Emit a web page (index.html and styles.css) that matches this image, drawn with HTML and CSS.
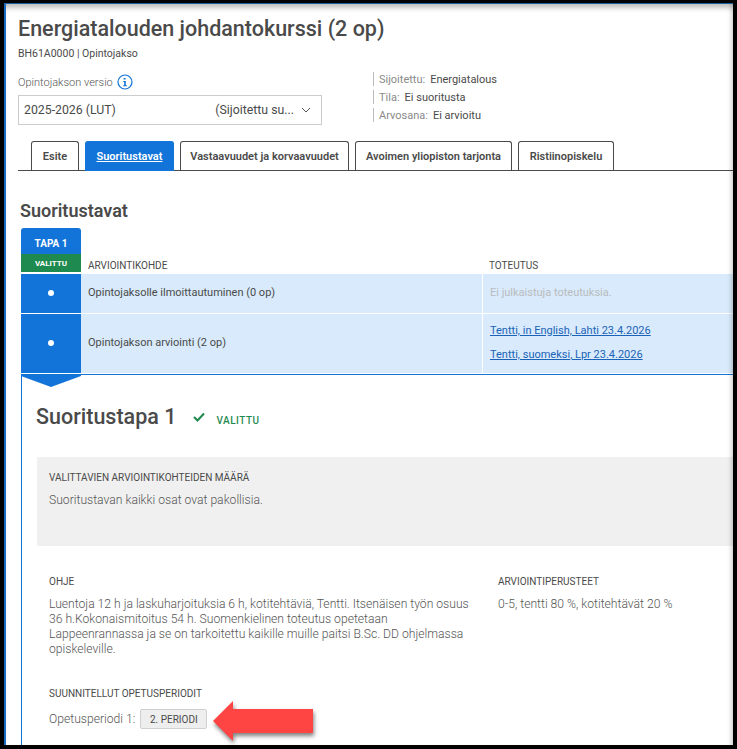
FILE: index.html
```html
<!DOCTYPE html>
<html lang="fi">
<head>
<meta charset="utf-8">
<title>Energiatalouden johdantokurssi</title>
<link rel="stylesheet" href="styles.css">
</head>
<body>
<div class="window">
  <main class="page">
    <h1 class="title">Energiatalouden johdantokurssi (2 op)</h1>
    <p class="code">BH61A0000 | Opintojakso</p>
    <div class="meta">
      <div class="version">
        <div class="version-label">Opintojakson versio
          <svg class="info" viewBox="0 0 16 16" width="16" height="16"><circle cx="8" cy="8" r="7" fill="none" stroke="#1274d8" stroke-width="1.2"/><path d="M6.6 4h2v1.6h-2zM6.2 7h2.6v4.2h1v1H6.2v-1h1V8h-1z" fill="#1274d8"/></svg>
        </div>
        <div class="select"><span>2025-2026 (LUT)</span><span class="select-right">(Sijoitettu su...<svg class="chev" viewBox="0 0 10 6" width="10" height="6"><path d="M1 1l4 4 4-4" fill="none" stroke="#555" stroke-width="1"/></svg></span></div>
      </div>
      <dl class="facts">
        <div class="fact"><dt>Sijoitettu:</dt><dd>Energiatalous</dd></div>
        <div class="fact"><dt>Tila:</dt><dd>Ei suoritusta</dd></div>
        <div class="fact"><dt>Arvosana:</dt><dd>Ei arvioitu</dd></div>
      </dl>
    </div>
    <nav class="tabs">
      <a class="tab t1">Esite</a>
      <a class="tab t2 active">Suoritustavat</a>
      <a class="tab t3">Vastaavuudet ja korvaavuudet</a>
      <a class="tab t4">Avoimen yliopiston tarjonta</a>
      <a class="tab t5">Ristiinopiskelu</a>
    </nav>
    <h2 class="section-title">Suoritustavat</h2>
    <div class="matrix">
      <div class="way-head"><div class="way-name">TAPA 1</div><div class="way-state">VALITTU</div></div>
      <div class="col-head col-a">ARVIOINTIKOHDE</div>
      <div class="col-head col-b">TOTEUTUS</div>
      <div class="way-cell r1"><span class="dot"></span></div>
      <div class="cell r1">Opintojaksolle ilmoittautuminen (0 op)</div>
      <div class="cell r1 sep muted">Ei julkaistuja toteutuksia.</div>
      <div class="way-cell r2"><span class="dot"></span></div>
      <div class="cell r2">Opintojakson arviointi (2 op)</div>
      <div class="cell r2 sep links"><a>Tentti, in English, Lahti 23.4.2026</a><a>Tentti, suomeksi, Lpr 23.4.2026</a></div>
    </div>
    <section class="panel">
      <svg class="pointer" viewBox="0 0 60 12" width="60" height="12"><path d="M0 0h60v1L30 12 0 1z" fill="#1274d8"/></svg>
      <div class="panel-head">
        <h3 class="panel-title">Suoritustapa 1</h3>
        <svg class="check" viewBox="0 0 12 10" width="12" height="10"><path d="M1 5l3.5 3.5L11 1.5" fill="none" stroke="#1f8a50" stroke-width="2"/></svg>
        <span class="chosen">VALITTU</span>
      </div>
      <div class="graybox">
        <div class="label">VALITTAVIEN ARVIOINTIKOHTEIDEN MÄÄRÄ</div>
        <p class="body">Suoritustavan kaikki osat ovat pakollisia.</p>
      </div>
      <div class="two">
        <div class="ohje">
          <div class="label">OHJE</div>
          <p class="body">Luentoja 12 h ja laskuharjoituksia 6 h, kotitehtäviä, Tentti. Itsenäisen työn osuus 36 h.Kokonaismitoitus 54 h. Suomenkielinen toteutus opetetaan Lappeenrannassa ja se on tarkoitettu kaikille muille paitsi B.Sc. DD ohjelmassa opiskeleville.</p>
        </div>
        <div class="perusteet">
          <div class="label">ARVIOINTIPERUSTEET</div>
          <p class="body">0-5, tentti 80 %, kotitehtävät 20 %</p>
        </div>
      </div>
      <div class="label periods">SUUNNITELLUT OPETUSPERIODIT</div>
      <div class="period-row"><span class="body">Opetusperiodi 1:</span><span class="chip">2. PERIODI</span></div>
    </section>
  </main>
  <svg class="callout" viewBox="0 0 102 44" width="102" height="44"><path d="M0 20L20 0v8h80v24H20v8z" fill="#ff4444"/></svg>
</div>
</body>
</html>
```
FILE: styles.css
```css
* { box-sizing: border-box; }
html, body { margin: 0; height: 100%; overflow: hidden; background: #000; }
body { font-family: Roboto, "Liberation Sans", sans-serif; color: #4a4a4a; }
.window {
  position: relative;
  margin: 3px 4px 0 4px;
  width: 729px;
  height: 742px;
  background: #fff;
  border-top: 1px solid #1a5f9e;
  border-left: 2px solid #1a6cc0;
  overflow: hidden;
}
.window::after {
  content: "";
  position: absolute;
  inset: 0;
  pointer-events: none;
  box-shadow: inset 0 7px 5px -3px rgba(0,0,0,.25), inset -5px 0 4px -3px rgba(0,0,0,.18);
}
.page { padding: 0 0 0 12px; }
.title { margin: 10px 0 0; font-size: 21.5px; line-height: 30px; font-weight: 500; color: #4a4a4a; }
.code { margin: 3px 0 0; font-size: 10.5px; line-height: 14px; color: #4a4a4a; }
.meta { display: flex; margin-top: 12px; height: 57px; }
.version { width: 304px; }
.version-label { display: flex; align-items: center; gap: 4px; height: 16px; font-size: 11px; font-weight: 300; color: #555; margin-top: 1px; }
.select { display: flex; justify-content: space-between; align-items: center; margin-top: 5px; height: 30px; padding: 0 10px 0 5px; border: 1px solid #ccc; font-size: 12.3px; }
.select-right { display: flex; align-items: center; gap: 7px; }
.facts { margin: -1px 0 0 51px; }
.fact { display: flex; gap: 5px; align-items: center; border-left: 1px solid #bbb; padding-left: 5px; font-size: 11px; height: 14px; margin: 0 0 4px; }
.fact dt { color: #8a8a8a; }
.fact dd { margin: 0; color: #4a4a4a; }
.tabs { display: flex; gap: 6px; margin-top: 11px; height: 30px; padding-left: 13px; border-bottom: 1px solid #4a4a4a; }
.tab { display: flex; align-items: center; justify-content: center; height: 30px; border: 1px solid #4a4a4a; border-bottom: 0; border-radius: 3px 3px 0 0; font-size: 11px; font-weight: 600; color: #4a4a4a; }
.t1 { width: 48px; } .t2 { width: 89px; } .t3 { width: 169px; } .t4 { width: 157px; } .t5 { width: 96px; }
.tab.active { background: #1274d8; border-color: #1274d8; color: #fff; text-decoration: underline; }
.section-title { margin: 28px 0 0 2px; font-size: 18px; line-height: 24px; font-weight: 600; color: #4a4a4a; }
.matrix { display: grid; grid-template-columns: 60px 401px 1fr; grid-template-rows: 46px 40px 60px; margin: 5px 0 0 3px; }
.way-head { border-radius: 3px 3px 0 0; overflow: hidden; }
.way-name { height: 26px; padding-top: 5px; background: #1274d8; color: #fff; font-size: 10px; font-weight: 700; display: flex; align-items: center; justify-content: center; }
.way-state { height: 18px; background: #1f8a50; color: #fff; font-size: 8px; font-weight: 700; display: flex; align-items: center; justify-content: center; }
.col-head { display: flex; align-items: flex-end; font-size: 10px; color: #4a4a4a; padding: 0 0 3px 7px; }
.way-cell { background: #1274d8; display: flex; align-items: center; justify-content: center; padding: 0 1px 1px 0; border-bottom: 1px solid #fff; }
.dot { width: 6px; height: 6px; border-radius: 50%; background: #fff; }
.cell { background: #d8eafb; display: flex; align-items: center; padding: 0 0 3px 7px; font-size: 11px; color: #4a4a4a; border-bottom: 1px solid #fff; }
.cell.sep { border-left: 1px solid #fff; }
.muted { color: #b9bcbe; }
.cell.links { flex-direction: column; align-items: flex-start; justify-content: center; gap: 10px; padding-bottom: 1px; }
.links a { color: #1a63b8; text-decoration: underline; line-height: 14px; }
.panel { position: relative; margin-left: 3px; height: 400px; border-left: 1px solid #1274d8; border-top: 1px solid #1274d8; padding-left: 14px; }
.pointer { position: absolute; left: -1px; top: 0; display: block; }
.panel-head { display: flex; align-items: center; height: 30px; margin-top: 26px; }
.panel-title { margin: 0; font-size: 21.5px; font-weight: 500; color: #4a4a4a; }
.check { margin: 2px 0 0 17px; }
.chosen { margin: 9px 0 0 11px; font-size: 10px; font-weight: 500; letter-spacing: .5px; color: #1f8a50; }
.graybox { margin: 26px 0 0 1px; height: 89px; padding: 14px 12px 0; background: #f0f0f0; }
.label { font-size: 10px; line-height: 14px; color: #4a4a4a; }
.body { font-size: 12.15px; font-weight: 300; line-height: 15px; color: #555; margin: 0; }
.graybox .body { margin-top: 8px; }
.two { display: grid; grid-template-columns: 449px 1fr; margin: 29px 0 0 13px; }
.ohje { padding-right: 20px; }
.two .body { margin-top: 8px; }
.periods { margin: 30px 0 0 13px; }
.period-row { display: flex; align-items: center; gap: 5px; margin: 8px 0 0 13px; }
.chip { display: flex; align-items: center; justify-content: center; width: 67px; height: 20px; background: #eee; border: 1px solid #d0d0d0; border-radius: 2px; font-size: 10px; color: #4a4a4a; }
.callout { position: absolute; left: 207px; top: 697px; filter: drop-shadow(1px 3px 2px rgba(0,0,0,.5)); }
```
